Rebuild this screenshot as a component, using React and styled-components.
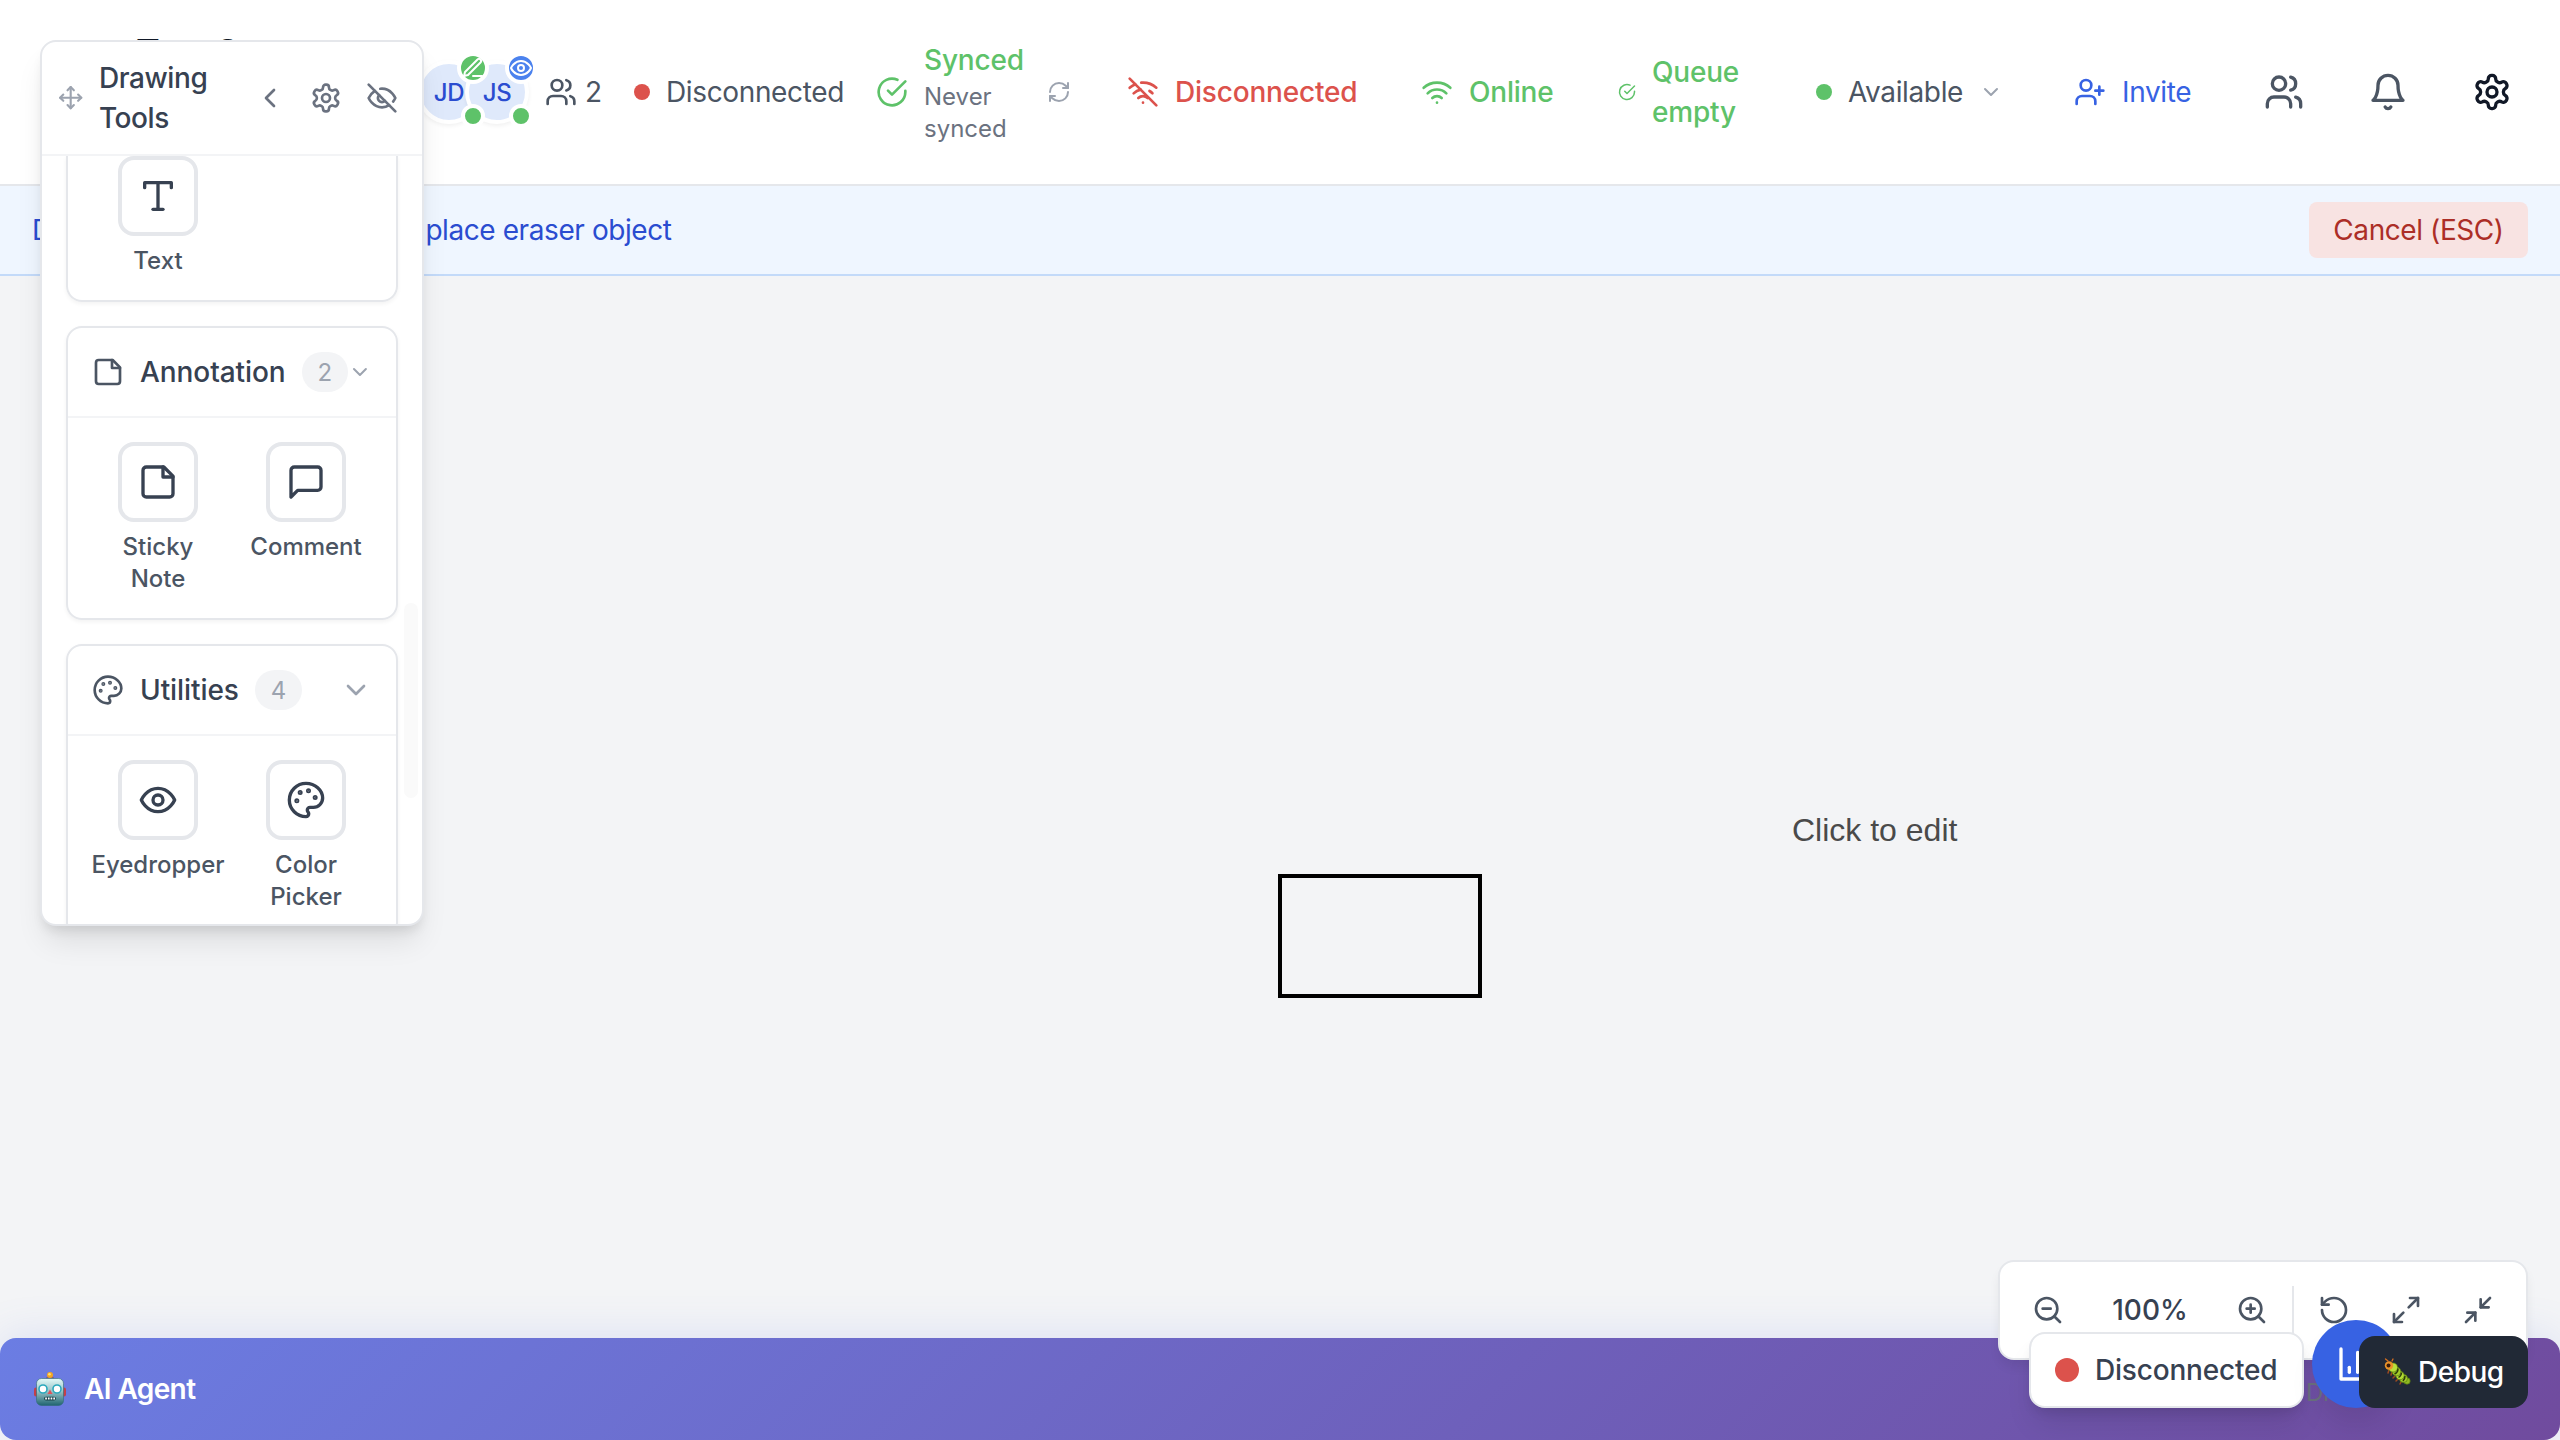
import React from "react";
import styled, { createGlobalStyle } from "styled-components";

const Global = createGlobalStyle`
  *, *::before, *::after { box-sizing: border-box; }
  body { margin: 0; background: #f3f4f6; font-family: Inter, "Liberation Sans", sans-serif; font-size: 28px; line-height: 40px; letter-spacing: -0.36px; color: #374151; }
  button { font: inherit; letter-spacing: inherit; border: 0; background: none; padding: 0; color: inherit; }
`;

const PATHS = {
  move: ["M5 9 2 12 5 15", "M9 5 12 2 15 5", "M15 19 12 22 9 19", "M19 9 22 12 19 15", "M2 12H22", "M12 2V22"],
  chevronLeft: ["m15 18-6-6 6-6"],
  chevronDown: ["m6 9 6 6 6-6"],
  settings: ["M12.22 2h-.44a2 2 0 0 0-2 2v.18a2 2 0 0 1-1 1.73l-.43.25a2 2 0 0 1-2 0l-.15-.08a2 2 0 0 0-2.73.73l-.22.38a2 2 0 0 0 .73 2.73l.15.1a2 2 0 0 1 1 1.72v.51a2 2 0 0 1-1 1.74l-.15.09a2 2 0 0 0-.73 2.73l.22.38a2 2 0 0 0 2.73.73l.15-.08a2 2 0 0 1 2 0l.43.25a2 2 0 0 1 1 1.73V20a2 2 0 0 0 2 2h.44a2 2 0 0 0 2-2v-.18a2 2 0 0 1 1-1.73l.43-.25a2 2 0 0 1 2 0l.15.08a2 2 0 0 0 2.73-.73l.22-.39a2 2 0 0 0-.73-2.73l-.15-.08a2 2 0 0 1-1-1.74v-.5a2 2 0 0 1 1-1.74l.15-.09a2 2 0 0 0 .73-2.73l-.22-.38a2 2 0 0 0-2.73-.73l-.15.08a2 2 0 0 1-2 0l-.43-.25a2 2 0 0 1-1-1.73V4a2 2 0 0 0-2-2z", "M15 12a3 3 0 1 1-6 0 3 3 0 0 1 6 0"],
  eyeOff: ["M9.88 9.88a3 3 0 1 0 4.24 4.24", "M10.73 5.08A10.43 10.43 0 0 1 12 5c7 0 10 7 10 7a13.16 13.16 0 0 1-1.67 2.68", "M6.61 6.61A13.526 13.526 0 0 0 2 12s3 7 10 7a9.74 9.74 0 0 0 5.39-1.61", "M2 2 22 22"],
  eye: ["M2 12s3-7 10-7 10 7 10 7-3 7-10 7-10-7-10-7Z", "M15 12a3 3 0 1 1-6 0 3 3 0 0 1 6 0"],
  type: ["M4 7V4h16v3", "M9 20h6", "M12 4v16"],
  note: ["M15.5 3H5a2 2 0 0 0-2 2v14c0 1.1.9 2 2 2h14a2 2 0 0 0 2-2V8.5L15.5 3Z", "M15 3v6h6"],
  message: ["M21 15a2 2 0 0 1-2 2H7l-4 4V5a2 2 0 0 1 2-2h14a2 2 0 0 1 2 2z"],
  palette: ["M12 2C6.5 2 2 6.5 2 12s4.5 10 10 10c.926 0 1.648-.746 1.648-1.688 0-.437-.18-.835-.437-1.125-.29-.289-.438-.652-.438-1.125a1.64 1.64 0 0 1 1.668-1.668h1.996c3.051 0 5.555-2.503 5.555-5.554C21.965 6.012 17.461 2 12 2z"],
  users: ["M16 21v-2a4 4 0 0 0-4-4H6a4 4 0 0 0-4 4v2", "M13 7a4 4 0 1 1-8 0 4 4 0 0 1 8 0", "M22 21v-2a4 4 0 0 0-3-3.87", "M16 3.13a4 4 0 0 1 0 7.75"],
  userPlus: ["M16 21v-2a4 4 0 0 0-4-4H6a4 4 0 0 0-4 4v2", "M13 7a4 4 0 1 1-8 0 4 4 0 0 1 8 0", "M19 8v6", "M22 11h-6"],
  checkCircle: ["M22 11.08V12a10 10 0 1 1-5.93-9.14", "m9 11 3 3L22 4"],
  refresh: ["M3 12a9 9 0 0 1 9-9 9.75 9.75 0 0 1 6.74 2.74L21 8", "M21 3v5h-5", "M21 12a9 9 0 0 1-9 9 9.75 9.75 0 0 1-6.74-2.74L3 16", "M8 16H3v5"],
  wifiOff: ["M2 2 22 22", "M8.5 16.5a5 5 0 0 1 7 0", "M2 8.82a15 15 0 0 1 4.17-2.65", "M10.66 5c4.01-.36 8.14.9 11.34 3.76", "M16.85 11.25a10 10 0 0 1 2.22 1.68", "M5 13a10 10 0 0 1 5.24-2.76", "M12 20h.01"],
  wifi: ["M5 13a10 10 0 0 1 14 0", "M8.5 16.5a5 5 0 0 1 7 0", "M2 8.82a15 15 0 0 1 20 0", "M12 20h.01"],
  bell: ["M6 8a6 6 0 0 1 12 0c0 7 3 9 3 9H3s3-2 3-9", "M10.3 21a1.94 1.94 0 0 0 3.4 0"],
  zoomOut: ["M19 11a8 8 0 1 1-16 0 8 8 0 0 1 16 0", "m21 21-4.35-4.35", "M8 11h6"],
  zoomIn: ["M19 11a8 8 0 1 1-16 0 8 8 0 0 1 16 0", "m21 21-4.35-4.35", "M11 8v6", "M8 11h6"],
  rotate: ["M3 12a9 9 0 1 0 9-9 9.75 9.75 0 0 0-6.74 2.74L3 8", "M3 3v5h5"],
  maximize: ["M15 3h6v6", "M9 21H3v-6", "M21 3l-7 7", "M3 21l7-7"],
  minimize: ["M4 14h6v6", "M20 10h-6V4", "M14 10l7-7", "M3 21l7-7"],
  chart: ["M3 3v18h18", "M18 17V9", "M13 17V5", "M8 17v-3"],
  edit: ["M12 20h9", "M16.5 3.5a2.12 2.12 0 0 1 3 3L7 19l-4 1 1-4Z"],
};
const DOTS = { palette: [[13.5, 6.5], [17.5, 10.5], [8.5, 7.5], [6.5, 12.5]] };

const Svg = styled.svg`
  width: ${(p) => p.$w || p.$size}px;
  height: ${(p) => p.$size}px;
  flex: ${(p) => (p.$shrink ? "0 1 auto" : "none")};
  min-width: 0;
  color: ${(p) => p.$color || "inherit"};
  fill: none;
  stroke: currentColor;
  stroke-width: 2;
  stroke-linecap: round;
  stroke-linejoin: round;
`;
const Icon = ({ name, size = 32, w, color, shrink }) => (
  <Svg viewBox="0 0 24 24" $size={size} $w={w} $color={color} $shrink={shrink}>
    {PATHS[name].map((d) => <path key={d} d={d} />)}
    {(DOTS[name] || []).map(([x, y]) => <circle key={x} cx={x} cy={y} r="0.5" fill="currentColor" />)}
  </Svg>
);

const Page = styled.div`
  position: relative;
  height: 1440px;
  display: flex;
  flex-direction: column;
  overflow: hidden;
`;
const Header = styled.header`
  height: 186px;
  flex: none;
  display: flex;
  align-items: center;
  padding: 0 32px;
  background: #fff;
  border-bottom: 2px solid #e5e7eb;
`;
const Brand = styled.h1`
  width: 385px;
  margin: 0;
  padding-left: 104px;
  align-self: flex-start;
  margin-top: 24px;
  font-size: 36px;
  line-height: 56px;
  letter-spacing: -1.2px;
  font-weight: 600;
  color: #111827;
  flex: none;
`;
const Group = styled.div`
  width: ${(p) => p.$w}px;
  flex: none;
  display: flex;
  align-items: center;
  gap: ${(p) => p.$gap ?? 16}px;
  color: ${(p) => p.$color || "#4b5563"};
  font-weight: ${(p) => p.$weight || 400};
  letter-spacing: ${(p) => (p.$weight ? "-0.2px" : "inherit")};
`;
const Label = styled.span`
  min-width: ${(p) => p.$w || 0}px;
  white-space: nowrap;
`;
const WrapLabel = styled.span`
  width: 90px;
`;
const Dot = styled.span`
  width: ${(p) => p.$size || 16}px;
  height: ${(p) => p.$size || 16}px;
  flex: none;
  border-radius: 50%;
  background: ${(p) => p.$color};
`;
const Avatar = styled.div`
  position: relative;
  width: 64px;
  height: 64px;
  flex: none;
  display: flex;
  align-items: center;
  justify-content: center;
  padding-top: 1px;
  border: 4px solid #fff;
  border-radius: 50%;
  background: #dfe9fb;
  box-shadow: 0 2px 4px rgba(0, 0, 0, 0.06);
  color: #2a4cd0;
  font-size: 24px;
  font-weight: 500;
  & + & { margin-left: -16px; }
`;
const Activity = styled.span`
  position: absolute;
  z-index: 2;
  top: -12px;
  right: -12px;
  width: 32px;
  height: 32px;
  display: flex;
  align-items: center;
  justify-content: center;
  border: 4px solid #fff;
  border-radius: 50%;
  background: ${(p) => p.$color};
  color: #fff;
`;
const Presence = styled.span`
  position: absolute;
  z-index: 2;
  right: -8px;
  bottom: -8px;
  width: 24px;
  height: 24px;
  border: 4px solid #fff;
  border-radius: 50%;
  background: #5ec269;
`;
const SyncText = styled.div`
  width: 99px;
  display: flex;
  flex-direction: column;
`;
const SyncNote = styled.span`
  margin-bottom: -1px;
  padding-top: 1px;
  font-size: 24px;
  line-height: 32px;
  letter-spacing: 0;
  font-weight: 400;
  color: #6b7280;
`;
const RefreshButton = styled.button`
  display: flex;
  padding: 8px;
  color: #9ca3af;
`;
const HeaderActions = styled.div`
  display: flex;
  gap: 32px;
`;
const ActionButton = styled.button`
  display: flex;
  padding: 16px;
  color: ${(p) => p.$color};
`;

const Banner = styled.div`
  height: 90px;
  flex: none;
  display: flex;
  align-items: center;
  justify-content: space-between;
  padding: 0 32px;
  background: #eff6ff;
  border-bottom: 2px solid #c3daf9;
  color: #2a4cd0;
  letter-spacing: -0.42px;
`;
const Mode = styled.span`
  letter-spacing: -0.8px;
`;
const CancelButton = styled.button`
  width: 219px;
  height: 56px;
  border-radius: 8px;
  background: #f8e3e2;
  color: #ac2e27;
`;
const Canvas = styled.main`
  position: relative;
  flex: 1;
`;
const Shape = styled.div`
  position: absolute;
  left: 1278px;
  top: 598px;
  width: 204px;
  height: 124px;
  border: 4px solid #000;
`;
const CanvasText = styled.div`
  position: absolute;
  left: 1792px;
  top: 536px;
  font: 32px/36px "Liberation Sans", Arial, sans-serif;
  letter-spacing: 0;
  color: #4a4a4a;
  white-space: nowrap;
`;

const Panel = styled.aside`
  position: absolute;
  left: 40px;
  top: 40px;
  width: 384px;
  height: 886px;
  display: flex;
  flex-direction: column;
  overflow: hidden;
  border: 2px solid #e5e7eb;
  border-radius: 16px;
  background: #fff;
  box-shadow: 0 20px 30px -6px rgba(0, 0, 0, 0.1), 0 8px 12px -4px rgba(0, 0, 0, 0.1);
`;
const PanelHeader = styled.div`
  height: 114px;
  flex: none;
  display: flex;
  align-items: center;
  padding: 0 16px;
  border-bottom: 2px solid #f3f4f6;
`;
const PanelTitle = styled.h2`
  width: 130px;
  margin: 0 auto 0 15.5px;
  font-size: 28px;
  line-height: 40px;
  letter-spacing: -0.4px;
  font-weight: 500;
  color: #374151;
`;
const PanelButtons = styled.div`
  display: flex;
  gap: 8px;
  color: #6b7280;
`;
const PanelButton = styled.button`
  display: flex;
  padding: 8px;
`;
const PanelBody = styled.div`
  position: relative;
  flex: 1;
  min-height: 0;
  overflow: hidden;
  display: flex;
  flex-direction: column;
  gap: 24px;
  padding: 0 24px;
`;
const ScrollThumb = styled.div`
  position: absolute;
  top: 447px;
  right: 4px;
  width: 14px;
  height: 195px;
  border-radius: 7px;
  background: #fafafa;
`;
const Section = styled.section`
  flex: none;
  border: 2px solid #e5e7eb;
  border-radius: 16px;
  box-shadow: 0 2px 4px rgba(0, 0, 0, 0.05);
  ${(p) => p.$continued && "border-top: 0; border-top-left-radius: 0; border-top-right-radius: 0;"}
`;
const SectionHeader = styled.div`
  height: 90px;
  display: flex;
  align-items: center;
  justify-content: space-between;
  padding: 0 24px;
  border-bottom: 2px solid #f3f4f6;
`;
const SectionTitle = styled.div`
  flex: none;
  display: flex;
  align-items: center;
  gap: 16px;
  letter-spacing: -0.08px;
  font-weight: 500;
`;
const Count = styled.span`
  height: 40px;
  padding: 1px 16px 0;
  border-radius: 20px;
  background: #f3f4f6;
  color: #9ca3af;
  font-size: 24px;
  font-weight: 400;
`;
const ToolGrid = styled.div`
  display: grid;
  grid-template-columns: 132px 132px;
  gap: 16px;
  padding: ${(p) => (p.$flush ? 0 : 24)}px 24px 23px;
`;
const Tool = styled.div`
  display: flex;
  flex-direction: column;
  align-items: center;
  gap: 9px;
  color: #374151;
`;
const ToolButton = styled.button`
  width: 80px;
  height: 80px;
  display: flex;
  align-items: center;
  justify-content: center;
  border: 4px solid #e5e7eb;
  border-radius: 16px;
`;
const ToolName = styled.span`
  width: ${(p) => p.$w || 140}px;
  text-align: center;
  font-size: 24px;
  line-height: 32px;
  letter-spacing: 0;
  font-weight: 500;
  color: #4b5563;
`;

const AgentBar = styled.footer`
  height: 102px;
  flex: none;
  display: flex;
  align-items: center;
  padding: 0 32px;
  border-radius: 16px;
  background: linear-gradient(135deg, #6b7de3 0%, #704b9e 100%);
  box-shadow: 0 -4px 40px rgba(102, 126, 234, 0.15);
  color: #fff;
`;
const AgentName = styled.span`
  margin-left: 16px;
  letter-spacing: -0.6px;
  font-weight: 600;
`;
const AgentStatus = styled.span`
  margin-left: auto;
  padding-top: 8px;
  width: 222px;
  font-size: 24px;
  color: #6b7280;
  white-space: nowrap;
`;
const ZoomPanel = styled.div`
  position: absolute;
  left: 1998px;
  top: 1260px;
  width: 530px;
  height: 100px;
  display: flex;
  align-items: center;
  gap: 8px;
  padding: 0 16px;
  border: 2px solid #e5e7eb;
  border-radius: 16px;
  background: #fff;
  box-shadow: 0 8px 12px -2px rgba(0, 0, 0, 0.08);
  color: #4b5563;
`;
const ZoomButton = styled.button`
  display: flex;
  padding: 16px;
`;
const ZoomValue = styled.span`
  width: 124px;
  text-align: center;
  letter-spacing: 0;
  font-weight: 500;
  color: #374151;
`;
const Divider = styled.span`
  width: 2px;
  height: 48px;
  background: #e5e7eb;
`;
const StatusPill = styled.div`
  position: absolute;
  left: 2029px;
  top: 1332px;
  width: 275px;
  height: 76px;
  display: flex;
  align-items: center;
  gap: 16px;
  padding: 0 24px;
  border: 2px solid #e5e7eb;
  border-radius: 16px;
  background: #fff;
  box-shadow: 0 20px 30px -6px rgba(0, 0, 0, 0.1), 0 8px 12px -4px rgba(0, 0, 0, 0.1);
  letter-spacing: -0.2px;
  font-weight: 500;
`;
const ChartButton = styled.button`
  position: absolute;
  left: 2312px;
  top: 1320px;
  padding: 24px;
  display: flex;
  border-radius: 50%;
  background: #3762e3;
  color: #fff;
  box-shadow: 0 20px 30px -6px rgba(0, 0, 0, 0.1);
`;
const DebugButton = styled.button`
  position: absolute;
  left: 2359px;
  top: 1336px;
  width: 169px;
  height: 72px;
  display: flex;
  align-items: center;
  gap: 7px;
  padding: 0 0 0 24px;
  border-radius: 16px;
  background: #212936;
  color: #fff;
  letter-spacing: -0.5px;
  font-weight: 500;
`;
const Emoji = styled.svg`
  width: ${(p) => p.$size}px;
  height: ${(p) => p.$size}px;
  flex: none;
`;

const Robot = () => (
  <Emoji viewBox="0 0 36 36" $size={36}>
    <defs>
      <linearGradient id="face" x1="0" y1="0" x2="0" y2="1">
        <stop offset="0" stopColor="#e4faf8" /><stop offset="0.45" stopColor="#9cc6ca" /><stop offset="1" stopColor="#1f6470" />
      </linearGradient>
    </defs>
    <rect x="2" y="16.500" width="4" height="9" rx="2" fill="#c23f49" />
    <rect x="30" y="16.500" width="4" height="9" rx="2" fill="#c23f49" />
    <ellipse cx="18" cy="7.500" rx="4" ry="2.500" fill="#7a5a86" />
    <circle cx="18" cy="4" r="3" fill="#f5a623" />
    <circle cx="17.500" cy="3.200" r="1.300" fill="#ffe173" />
    <rect x="4.500" y="7.500" width="27" height="27" rx="5" fill="url(#face)" stroke="#2f6a74" strokeWidth="0.600" />
    <circle cx="11" cy="18" r="4" fill="#fff" stroke="#2ba9bd" strokeWidth="1.600" />
    <circle cx="25" cy="18" r="4" fill="#fff" stroke="#2ba9bd" strokeWidth="1.600" />
    <path d="M18 18.500l2.500 4.500h-5z" fill="#e0525a" />
    <rect x="12" y="25.800" width="12" height="3.600" rx="1.800" fill="#173f47" />
    <path d="M13.200 27.600h9.800" stroke="#fff" strokeWidth="2" strokeDasharray="1.700 1" />
  </Emoji>
);
const Caterpillar = () => (
  <Emoji viewBox="0 0 28 28" $size={28}>
    <path d="M6 12l-1 3M9 14l-1 3M12 18l-2 2M15 21l-2 2M18 24l-1 2" stroke="#9c4a20" strokeWidth="1.500" strokeLinecap="round" />
    <g stroke="#557a10" strokeWidth="0.700">
      <circle cx="24" cy="23" r="3.200" fill="#8fb820" />
      <circle cx="20.500" cy="20.500" r="4" fill="#a3cc28" />
      <circle cx="17" cy="17.500" r="4.200" fill="#b4dc35" />
      <circle cx="13.500" cy="13.500" r="4.400" fill="#a3cc28" />
      <circle cx="10" cy="9.500" r="4.600" fill="#b9e03a" />
    </g>
    <path d="M22 18q0 3-2 5M18.500 14.500q0 3-3 5M15 10.500q0 4-3.500 5.500" fill="none" stroke="#2c3a0a" strokeWidth="1.500" />
    <circle cx="6" cy="7.500" r="4.200" fill="#e8922a" />
    <circle cx="5.500" cy="7.500" r="2" fill="#3a1c0a" />
    <path d="M5 3L2.500 1M9 3l1-2" stroke="#d9701e" strokeWidth="1.300" strokeLinecap="round" />
  </Emoji>
);

const ToolItem = ({ icon, name, w }) => (
  <Tool>
    <ToolButton><Icon name={icon} size={40} /></ToolButton>
    <ToolName $w={w}>{name}</ToolName>
  </Tool>
);
const ToolSection = ({ icon, title, count, children }) => (
  <Section>
    <SectionHeader>
      <SectionTitle>
        <Icon name={icon} color="#4b5563" />
        {title}
        <Count>{count}</Count>
      </SectionTitle>
      <Icon name="chevronDown" color="#9ca3af" shrink />
    </SectionHeader>
    <ToolGrid>{children}</ToolGrid>
  </Section>
);

export default function App() {
  return (
    <Page>
      <Global />
      <Header>
        <Brand>Test Canvas</Brand>
        <Group $w={128} $gap={0}>
          <Avatar>JD<Activity $color="#5ec269"><Icon name="edit" size={24} /></Activity><Presence /></Avatar>
          <Avatar>JS<Activity $color="#4b82ee"><Icon name="eye" size={24} /></Activity><Presence /></Avatar>
        </Group>
        <Group $w={89} $gap={8}><Icon name="users" /><Label>2</Label></Group>
        <Group $w={242}><Dot $color="#dc524c" /><Label>Disconnected</Label></Group>
        <Group $w={251} $color="#5ec269" $weight={500}>
          <Icon name="checkCircle" />
          <SyncText>Synced<SyncNote>Never synced</SyncNote></SyncText>
          <RefreshButton><Icon name="refresh" size={24} /></RefreshButton>
        </Group>
        <Group $w={294} $color="#dc524c" $weight={500}><Icon name="wifiOff" /><Label>Disconnected</Label></Group>
        <Group $w={197} $color="#5ec269" $weight={500}><Icon name="wifi" /><Label>Online</Label></Group>
        <Group $w={198} $color="#5ec269" $weight={500}><Icon name="checkCircle" w={18} /><WrapLabel>Queue empty</WrapLabel></Group>
        <Group $w={258}><Dot $color="#5ec269" /><Label $w={114}>Available</Label><Icon name="chevronDown" size={24} color="#9ca3af" /></Group>
        <Group $w={174} $color="#3762e3"><Icon name="userPlus" /><Label>Invite</Label></Group>
        <HeaderActions>
          <ActionButton $color="#4b5563"><Icon name="users" size={40} /></ActionButton>
          <ActionButton $color="#4b5563"><Icon name="bell" size={40} /></ActionButton>
          <ActionButton $color="#111827"><Icon name="settings" size={40} /></ActionButton>
        </HeaderActions>
      </Header>
      <Banner>
        <Label><Mode>Drawing mode: Click canvas to </Mode>place eraser object</Label>
        <CancelButton>Cancel (ESC)</CancelButton>
      </Banner>
      <Canvas>
        <Shape />
        <CanvasText>Click to edit</CanvasText>
      </Canvas>
      <AgentBar>
        <Robot />
        <AgentName>AI Agent</AgentName>
        <AgentStatus>Disconnected</AgentStatus>
      </AgentBar>

      <Panel>
        <PanelHeader>
          <Icon name="move" size={25.4} color="#9ca3af" />
          <PanelTitle>Drawing Tools</PanelTitle>
          <PanelButtons>
            <PanelButton><Icon name="chevronLeft" /></PanelButton>
            <PanelButton><Icon name="settings" /></PanelButton>
            <PanelButton><Icon name="eyeOff" /></PanelButton>
          </PanelButtons>
        </PanelHeader>
        <PanelBody>
          <Section $continued>
            <ToolGrid $flush><ToolItem icon="type" name="Text" /></ToolGrid>
          </Section>
          <ToolSection icon="note" title="Annotation" count={2}>
            <ToolItem icon="note" name="Sticky Note" w={100} />
            <ToolItem icon="message" name="Comment" />
          </ToolSection>
          <ToolSection icon="palette" title="Utilities" count={4}>
            <ToolItem icon="eye" name="Eyedropper" />
            <ToolItem icon="palette" name="Color Picker" w={100} />
          </ToolSection>
          <ScrollThumb />
        </PanelBody>
      </Panel>

      <ZoomPanel>
        <ZoomButton><Icon name="zoomOut" /></ZoomButton>
        <ZoomValue>100%</ZoomValue>
        <ZoomButton><Icon name="zoomIn" /></ZoomButton>
        <Divider />
        <ZoomButton><Icon name="rotate" /></ZoomButton>
        <ZoomButton><Icon name="maximize" /></ZoomButton>
        <ZoomButton><Icon name="minimize" /></ZoomButton>
      </ZoomPanel>
      <StatusPill><Dot $size={24} $color="#dc524c" />Disconnected</StatusPill>
      <ChartButton><Icon name="chart" size={40} /></ChartButton>
      <DebugButton><Caterpillar />Debug</DebugButton>
    </Page>
  );
}
